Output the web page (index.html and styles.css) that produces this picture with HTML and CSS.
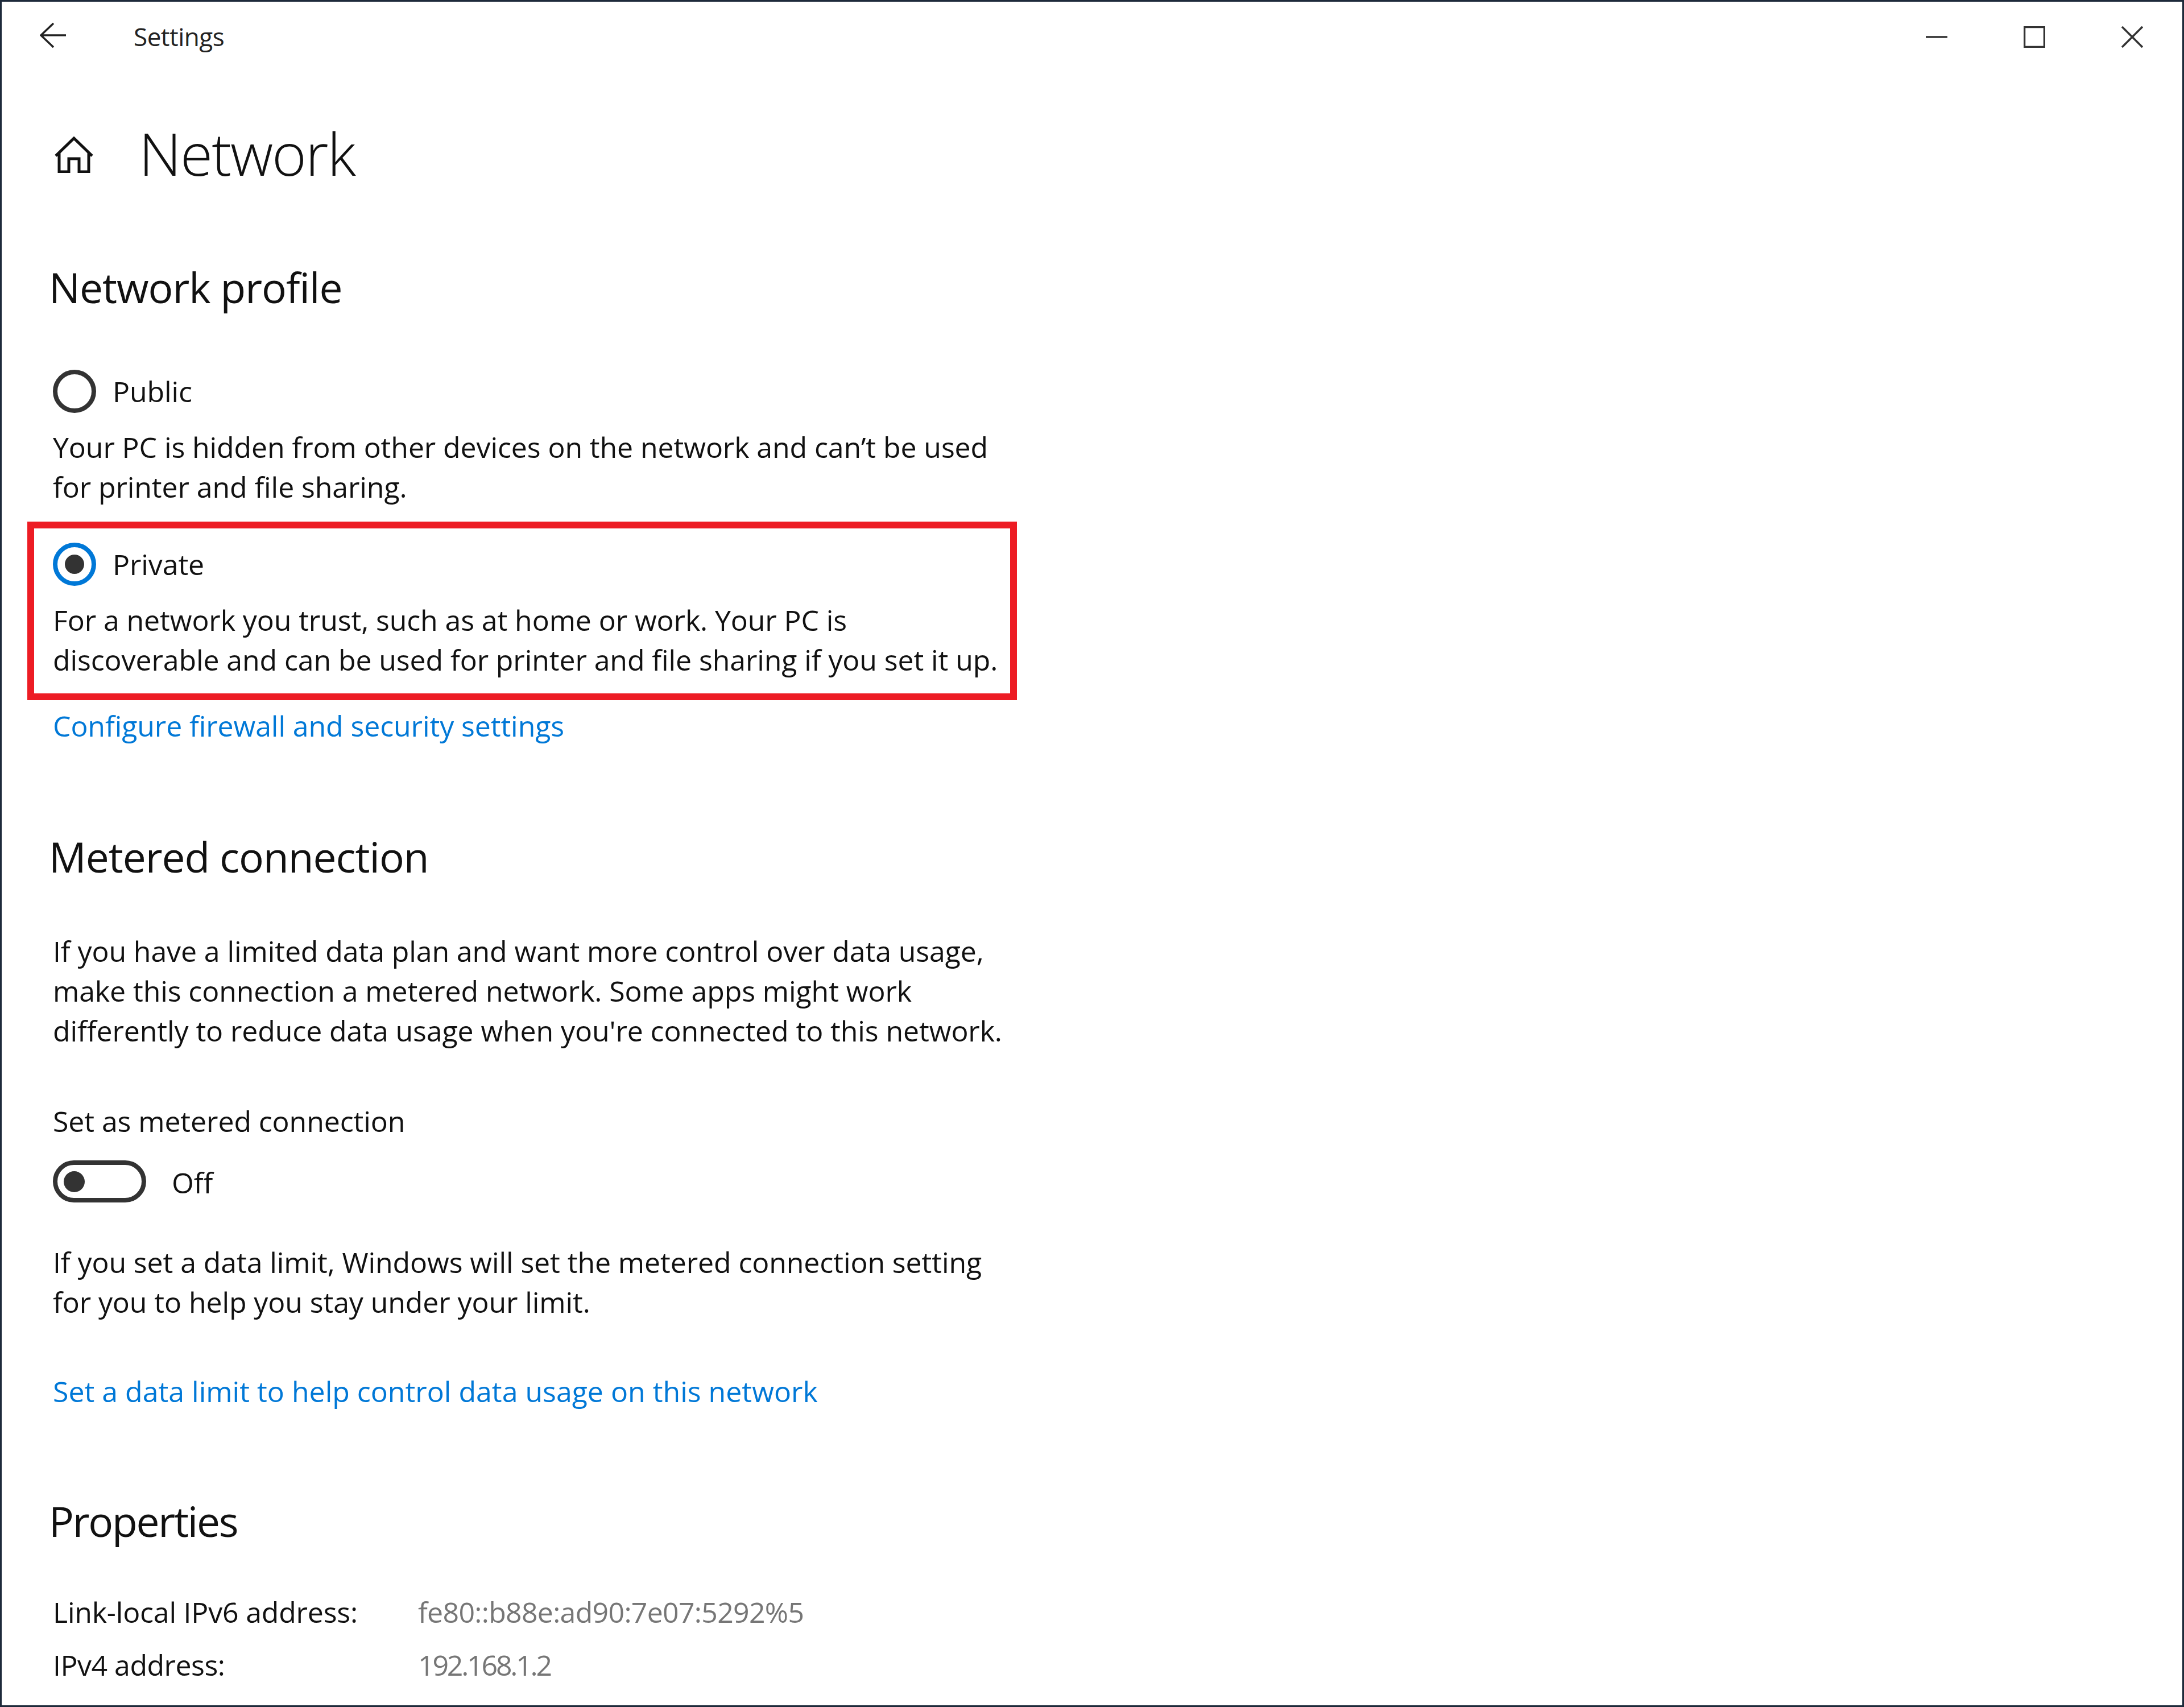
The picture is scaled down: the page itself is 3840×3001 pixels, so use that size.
FILE: index.html
```html
<!DOCTYPE html>
<html lang="en">
<head>
<meta charset="utf-8">
<title>Settings</title>
<link rel="stylesheet" href="styles.css">
</head>
<body>
<div class="window">
  <header class="titlebar">
    <svg class="back" viewBox="0 0 46 44"><path d="M24 1 2 22l22 21M2 22h44"/></svg>
    <span class="app-title">Settings</span>
    <div class="controls">
      <svg class="ctl" viewBox="0 0 38 38"><path d="M0 19h38"/></svg>
      <svg class="ctl" viewBox="0 0 38 38"><path d="M1.5 1.5h35v35h-35z"/></svg>
      <svg class="ctl" viewBox="0 0 38 38"><path d="M1 1l36 36M37 1 1 37"/></svg>
    </div>
  </header>
  <main class="content">
    <div class="page-head">
      <svg class="home" viewBox="0 0 68 64"><path d="M2 34 34 3l32 31M8 27v35h17V39h18v23h17V27"/></svg>
      <h1>Network</h1>
    </div>

    <h2 class="h-profile">Network profile</h2>
    <div class="radio-row r-public"><span class="radio"></span><span class="radio-label">Public</span></div>
    <p class="desc">Your PC is hidden from other devices on the network and can’t be used<br>for printer and file sharing.</p>

    <div class="private">
      <div class="radio-row"><span class="radio on"></span><span class="radio-label">Private</span></div>
      <p class="desc">For a network you trust, such as at home or work. Your PC is<br>discoverable and can be used for printer and file sharing if you set it up.</p>
      <div class="highlight"></div>
    </div>
    <a class="link l-firewall">Configure firewall and security settings</a>

    <h2 class="h-metered">Metered connection</h2>
    <p class="p-plan">If you have a limited data plan and want more control over data usage,<br>make this connection a metered network. Some apps might work<br>differently to reduce data usage when you're connected to this network.</p>
    <p class="p-set">Set as metered connection</p>
    <div class="toggle-row"><span class="toggle"><span class="knob"></span></span><span class="toggle-label">Off</span></div>
    <p class="p-limit">If you set a data limit, Windows will set the metered connection setting<br>for you to help you stay under your limit.</p>
    <a class="link l-limit">Set a data limit to help control data usage on this network</a>

    <h2 class="h-props">Properties</h2>
    <dl class="props">
      <dt>Link-local IPv6 address:</dt><dd>fe80::b88e:ad90:7e07:5292%5</dd>
      <dt>IPv4 address:</dt><dd class="v4">192.168.1.2</dd>
    </dl>
  </main>
</div>
</body>
</html>
```
FILE: styles.css
```css
* { box-sizing: border-box; margin: 0; padding: 0; }
html, body { background: #fff; }
body { font-family: "Open Sans", "Noto Sans", sans-serif; color: #111; }
.window { width: 3840px; height: 3001px; border: 3px solid #1d2a3a; overflow: hidden; background: #fff; }

.titlebar { height: 126px; display: flex; align-items: center; padding-left: 67px; }
.back { width: 46px; height: 44px; fill: none; stroke: #222; stroke-width: 3.5; margin-top: -8px; }
.app-title { font-size: 44px; margin-left: 119px; letter-spacing: -.5px; color: #222; margin-top: -4px; }
.controls { margin-left: auto; display: flex; gap: 134px; padding-right: 69px; margin-top: -2px; }
.ctl { width: 38px; height: 38px; fill: none; stroke: #333; stroke-width: 3.5; }

.content { padding-left: 90px; font-size: 50px; line-height: 70px; letter-spacing: -.1px; }
.page-head { margin-top: 83px; height: 120px; display: flex; align-items: center; margin-left: 3px; }
.home { width: 68px; height: 64px; fill: none; stroke: #111; stroke-width: 5; }
h1 { font-weight: 350; font-size: 104px; line-height: 120px; margin-left: 80px; letter-spacing: -2px; color: #111; margin-top: -6px; }
h2 { font-weight: 400; font-size: 73px; line-height: 100px; margin-left: -7px; letter-spacing: -1px; color: #111; }

.h-profile { margin-top: 123px; }
.radio-row { display: flex; align-items: center; height: 76px; }
.r-public { margin-top: 95px; }
.radio { width: 76px; height: 76px; border-radius: 50%; border: 8px solid #333; flex: none; position: relative; }
.radio.on { border-color: #0078d7; }
.radio.on::after { content: ""; position: absolute; left: 13px; top: 13px; width: 34px; height: 34px; border-radius: 50%; background: #333; }
.radio-label { margin-left: 29px; }
.desc { margin-top: 25px; }

.private { position: relative; margin-top: 63px; }
.highlight { position: absolute; left: -45px; top: -37px; width: 1740px; height: 314px; border: 12px solid #ed1c24; }

.link { display: block; color: #0078d7; }
.l-firewall { margin-top: 46px; }
.h-metered { margin-top: 145px; }
.p-plan { margin-top: 81px; }
.p-set { margin-top: 89px; }
.toggle-row { display: flex; align-items: center; margin-top: 34px; height: 74px; }
.toggle { width: 164px; height: 74px; border: 8px solid #333; border-radius: 37px; display: flex; align-items: center; padding-left: 11px; }
.knob { width: 37px; height: 37px; border-radius: 50%; background: #333; }
.toggle-label { margin-left: 45px; padding-top: 4px; }
.p-limit { margin-top: 70px; }
.l-limit { margin-top: 87px; letter-spacing: 0; }
.h-props { margin-top: 143px; letter-spacing: -2.2px; }
.props { margin-top: 75px; display: grid; grid-template-columns: 642px auto; row-gap: 23px; justify-content: start; }
.props dt { letter-spacing: -.2px; }
.props dt:nth-of-type(2) { letter-spacing: -.5px; }
.props dd { color: #767676; letter-spacing: -.7px; }
.props dd.v4 { letter-spacing: -3.2px; }
```
